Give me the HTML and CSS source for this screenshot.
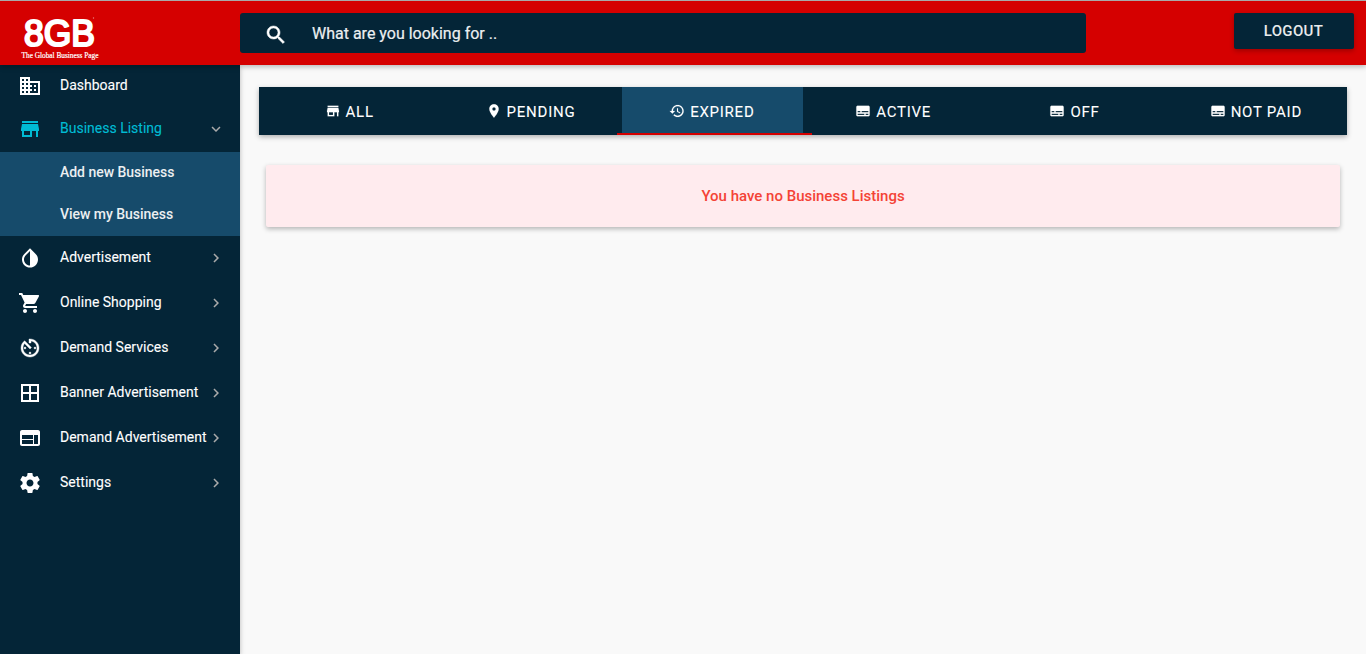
FILE: index.html
```html
<!DOCTYPE html>
<html lang="en">
<head>
<meta charset="utf-8">
<title>8GB - Business Listing</title>
<link rel="stylesheet" href="styles.css">
</head>
<body>
<svg class="sprite" aria-hidden="true">
  <symbol id="building" viewBox="0 0 24 24"><path d="M12 7V3H2v18h20V7H12zM6 19H4v-2h2v2zm0-4H4v-2h2v2zm0-4H4V9h2v2zm0-4H4V5h2v2zm4 12H8v-2h2v2zm0-4H8v-2h2v2zm0-4H8V9h2v2zm0-4H8V5h2v2zm10 12h-8v-2h2v-2h-2v-2h2v-2h-2V9h8v10zm-2-8h-2v2h2v-2zm0 4h-2v2h2v-2z"/></symbol>
  <symbol id="store" viewBox="0 0 24 24"><path d="M20 4H4v2h16V4zm1 10v-2l-1-5H4l-1 5v2h1v6h10v-6h4v6h2v-6h1zm-9 4H6v-4h6v4z"/></symbol>
  <symbol id="drop" viewBox="0 0 24 24"><path d="M17.66 7.93L12 2.27 6.34 7.93c-3.12 3.12-3.12 8.19 0 11.31C7.9 20.8 9.95 21.58 12 21.58s4.1-.78 5.66-2.34c3.12-3.12 3.12-8.19 0-11.31zM12 19.59c-1.6 0-3.11-.62-4.24-1.76C6.62 16.69 6 15.19 6 13.59s.62-3.11 1.76-4.24L12 5.1v14.49z"/></symbol>
  <symbol id="cart" viewBox="0 0 24 24"><path d="M7 18c-1.1 0-1.99.9-1.99 2S5.9 22 7 22s2-.9 2-2-.9-2-2-2zM1 2v2h2l3.6 7.59-1.35 2.45c-.16.28-.25.61-.25.96 0 1.1.9 2 2 2h12v-2H7.42c-.14 0-.25-.11-.25-.25l.03-.12.9-1.63h7.45c.75 0 1.41-.41 1.75-1.03l3.58-6.49A1 1 0 0 0 20 4H5.21l-.94-2H1zm16 16c-1.1 0-1.99.9-1.99 2s.89 2 1.99 2 2-.9 2-2-.9-2-2-2z"/></symbol>
  <symbol id="timer" viewBox="0 0 24 24"><path d="M11 17a1 1 0 0 0 2 0 1 1 0 0 0-2 0zm0-14v4h2V5.08c3.39.49 6 3.39 6 6.92 0 3.87-3.13 7-7 7s-7-3.13-7-7c0-1.68.59-3.22 1.58-4.42L12 13l1.41-1.41-6.8-6.8v.02C4.42 6.45 3 9.05 3 12c0 4.97 4.02 9 9 9 4.97 0 9-4.03 9-9s-4.03-9-9-9h-1zm7 9a1 1 0 0 0-2 0 1 1 0 0 0 2 0zM6 12a1 1 0 0 0 2 0 1 1 0 0 0-2 0z"/></symbol>
  <symbol id="grid" viewBox="0 0 24 24"><path d="M3 3v18h18V3H3zm8 16H5v-6h6v6zm0-8H5V5h6v6zm8 8h-6v-6h6v6zm0-8h-6V5h6v6z"/></symbol>
  <symbol id="web" viewBox="0 0 24 24"><path d="M20 4H4c-1.1 0-1.99.9-1.99 2L2 18c0 1.1.9 2 2 2h16c1.1 0 2-.9 2-2V6c0-1.1-.9-2-2-2zm-5 14H4v-4h11v4zm0-5H4V9h11v4zm5 5h-4V9h4v9z"/></symbol>
  <symbol id="gear" viewBox="0 0 24 24"><path d="M19.43 12.98c.04-.32.07-.64.07-.98s-.03-.66-.07-.98l2.11-1.65c.19-.15.24-.42.12-.64l-2-3.46c-.12-.22-.39-.3-.61-.22l-2.49 1c-.52-.4-1.08-.73-1.69-.98l-.38-2.65C14.46 2.18 14.25 2 14 2h-4c-.25 0-.46.18-.49.42l-.38 2.65c-.61.25-1.17.59-1.69.98l-2.49-1c-.23-.09-.49 0-.61.22l-2 3.46c-.13.22-.07.49.12.64l2.11 1.65c-.04.32-.07.65-.07.98s.03.66.07.98l-2.11 1.65c-.19.15-.24.42-.12.64l2 3.46c.12.22.39.3.61.22l2.49-1c.52.4 1.08.73 1.69.98l.38 2.65c.03.24.24.42.49.42h4c.25 0 .46-.18.49-.42l.38-2.65c.61-.25 1.17-.59 1.69-.98l2.49 1c.23.09.49 0 .61-.22l2-3.46c.12-.22.07-.49-.12-.64l-2.11-1.65zM12 15.5c-1.93 0-3.5-1.57-3.5-3.5s1.57-3.5 3.5-3.5 3.5 1.57 3.5 3.5-1.57 3.5-3.5 3.5z"/></symbol>
  <symbol id="chevron" viewBox="0 0 24 24"><path d="M10 6L8.59 7.41 13.17 12l-4.58 4.59L10 18l6-6z"/></symbol>
  <symbol id="search" viewBox="0 0 24 24"><path d="M15.5 14h-.79l-.28-.27C15.41 12.59 16 11.11 16 9.5 16 5.91 13.09 3 9.5 3S3 5.91 3 9.5 5.91 16 9.5 16c1.61 0 3.09-.59 4.23-1.57l.27.28v.79l5 4.99L20.49 19l-4.99-5zm-6 0C7.01 14 5 11.99 5 9.5S7.01 5 9.5 5 14 7.01 14 9.5 11.99 14 9.5 14z"/></symbol>
  <symbol id="pin" viewBox="0 0 24 24"><path d="M12 2C8.13 2 5 5.13 5 9c0 5.25 7 13 7 13s7-7.75 7-13c0-3.87-3.13-7-7-7zm0 9.5c-1.38 0-2.5-1.12-2.5-2.5s1.12-2.5 2.5-2.5 2.5 1.12 2.5 2.5-1.12 2.5-2.5 2.5z"/></symbol>
  <symbol id="history" viewBox="0 0 24 24"><path d="M13 3c-4.97 0-9 4.03-9 9H1l3.89 3.89.07.14L9 12H6c0-3.87 3.13-7 7-7s7 3.13 7 7-3.13 7-7 7c-1.93 0-3.68-.79-4.94-2.06l-1.42 1.42C8.27 19.99 10.51 21 13 21c4.97 0 9-4.03 9-9s-4.03-9-9-9zm-1 5v5l4.28 2.54.72-1.21-3.5-2.08V8H12z"/></symbol>
  <symbol id="subtitles" viewBox="0 0 24 24"><path d="M20 4H4c-1.1 0-2 .9-2 2v12c0 1.1.9 2 2 2h16c1.1 0 2-.9 2-2V6c0-1.1-.9-2-2-2zM4 12h4v2H4v-2zm10 6H4v-2h10v2zm6 0h-4v-2h4v2zm0-4H10v-2h10v2z"/></symbol>
</svg>

<header class="topbar">
  <a class="brand" href="#">
    <svg class="logo" viewBox="0 0 90 50">
      <text class="logo-name" x="8" y="37" textLength="71" lengthAdjust="spacingAndGlyphs">8GB</text>
      <circle class="logo-dot" cx="77.500" cy="9" r=".7"/>
      <text class="logo-tag" x="5.500" y="48.500" textLength="77" lengthAdjust="spacingAndGlyphs">The Global Business Page</text>
    </svg>
  </a>
  <div class="search">
    <svg class="search-icon"><use href="#search"/></svg>
    <span>What are you looking for ..</span>
  </div>
  <button class="logout">LOGOUT</button>
</header>

<div class="page">
  <nav class="sidebar">
    <a class="item item-first"><svg class="icon"><use href="#building"/></svg><span>Dashboard</span></a>
    <a class="item item-open"><svg class="icon"><use href="#store"/></svg><span>Business Listing</span><svg class="arrow"><use href="#chevron"/></svg></a>
    <div class="submenu">
      <a class="subitem">Add new Business</a>
      <a class="subitem">View my Business</a>
    </div>
    <a class="item"><svg class="icon"><use href="#drop"/></svg><span>Advertisement</span><svg class="arrow"><use href="#chevron"/></svg></a>
    <a class="item"><svg class="icon"><use href="#cart"/></svg><span>Online Shopping</span><svg class="arrow"><use href="#chevron"/></svg></a>
    <a class="item"><svg class="icon icon-bold"><use href="#timer"/></svg><span>Demand Services</span><svg class="arrow"><use href="#chevron"/></svg></a>
    <a class="item"><svg class="icon"><use href="#grid"/></svg><span>Banner Advertisement</span><svg class="arrow"><use href="#chevron"/></svg></a>
    <a class="item"><svg class="icon"><use href="#web"/></svg><span>Demand Advertisement</span><svg class="arrow"><use href="#chevron"/></svg></a>
    <a class="item"><svg class="icon"><use href="#gear"/></svg><span>Settings</span><svg class="arrow"><use href="#chevron"/></svg></a>
  </nav>
  <main class="content">
    <div class="tabs">
      <a class="tab"><svg class="tab-icon"><use href="#store"/></svg><span>ALL</span></a>
      <a class="tab"><svg class="tab-icon"><use href="#pin"/></svg><span>PENDING</span></a>
      <a class="tab tab-active"><svg class="tab-icon"><use href="#history"/></svg><span>EXPIRED</span></a>
      <a class="tab"><svg class="tab-icon"><use href="#subtitles"/></svg><span>ACTIVE</span></a>
      <a class="tab"><svg class="tab-icon"><use href="#subtitles"/></svg><span>OFF</span></a>
      <a class="tab"><svg class="tab-icon"><use href="#subtitles"/></svg><span>NOT PAID</span></a>
    </div>
    <div class="notice">You have no Business Listings</div>
  </main>
</div>
</body>
</html>
```
FILE: styles.css
```css
* { box-sizing: border-box; }
body {
  margin: 0;
  height: 654px;
  overflow: hidden;
  display: flex;
  flex-direction: column;
  background: #f9f9f9;
  font-family: Roboto, "Liberation Sans", sans-serif;
  color: #fff;
}
svg { fill: currentColor; flex: none; }
.sprite { display: none; }

.topbar {
  flex: none;
  height: 65px;
  display: flex;
  align-items: flex-start;
  padding: 12px 12px 0 0;
  background: #d50000;
  border-top: 1px solid #a9a9a9;
  box-shadow: 0 2px 5px rgba(0, 0, 0, .26);
  position: relative;
  z-index: 1;
}
.brand { width: 240px; padding-left: 16px; }
.logo { display: block; width: 90px; height: 50px; margin-top: -4px; color: #fff; overflow: visible; }
.logo-name { font: 37px "Liberation Sans", Arial, sans-serif; stroke: #fff; stroke-width: 2.2; stroke-linejoin: round; }
.logo-tag { font: 7.5px "Liberation Serif", serif; stroke: #fff; stroke-width: .2; }
.logo-dot { opacity: .5; }
.search {
  width: 846px;
  height: 40px;
  display: flex;
  align-items: center;
  padding-left: 24px;
  border-radius: 3px;
  background: #042537;
  font-size: 16px;
  color: #eceff1;
  -webkit-text-stroke: .2px;
}
.search-icon { width: 24px; height: 24px; margin-right: 24px; margin-top: 3px; color: #fff; stroke: #fff; stroke-width: .5; }
.logout {
  margin-left: auto;
  width: 120px;
  height: 36px;
  padding: 0 1px 0 0;
  border: 0;
  border-radius: 2px;
  background: #042537;
  color: #e8eaeb;
  font: 500 15px Roboto, sans-serif;
  letter-spacing: .35px;
  box-shadow: 0 2px 5px rgba(0, 0, 0, .26);
}

.page { flex: 1; display: flex; }
.sidebar {
  width: 240px;
  flex: none;
  background: #042537;
  box-shadow: 0 2px 5px rgba(0, 0, 0, .26);
  font-size: 14px;
}
.item {
  height: 45px;
  display: flex;
  align-items: center;
  padding: 0 15px 1px 18px;
}
.item span { margin: -2px 0 0 18px; white-space: nowrap; -webkit-text-stroke: .1px; }
.item-first { height: 42px; padding-bottom: 0; }
.item-open { color: #00bcd4; }
.icon { width: 24px; height: 24px; }
.icon-bold { stroke: currentColor; stroke-width: .4; }
.arrow { width: 18px; height: 18px; margin-left: auto; color: #aaa; }
.item-open .arrow { transform: rotate(90deg); }
.submenu { background: #164b6b; }
.subitem {
  display: block;
  height: 42px;
  padding-left: 60px;
  line-height: 41px;
  font-weight: 500;
  letter-spacing: -.03px;
  color: #eceff1;
}

.content { flex: 1; padding: 22px 19px 0; }
.tabs {
  height: 48px;
  display: grid;
  grid-template-columns: repeat(6, 1fr);
  background: #042537;
  box-shadow: 0 2px 5px rgba(0, 0, 0, .3);
}
.tab {
  display: flex;
  align-items: center;
  justify-content: center;
  gap: 5px;
  position: relative;
  font-size: 15px;
  letter-spacing: .75px;
  -webkit-text-stroke: .08px;
}
.tab-icon { width: 16px; height: 16px; margin: -1px 0 0 -1px; stroke: currentColor; stroke-width: .2; }
.tab span { padding-top: 2px; }
.tab-active { background: #164b6b; }
.tab-active::after {
  content: "";
  position: absolute;
  left: -5px;
  right: -9px;
  bottom: 0;
  height: 2px;
  background: #d50000;
  z-index: 1;
}
.notice {
  height: 62px;
  margin: 30px 7px 0;
  border-radius: 2px;
  background: #ffebee;
  box-shadow: 0 2px 5px rgba(0, 0, 0, .28);
  color: #f44336;
  font-size: 15px;
  font-weight: 500;
  line-height: 62px;
  text-align: center;
}
```
